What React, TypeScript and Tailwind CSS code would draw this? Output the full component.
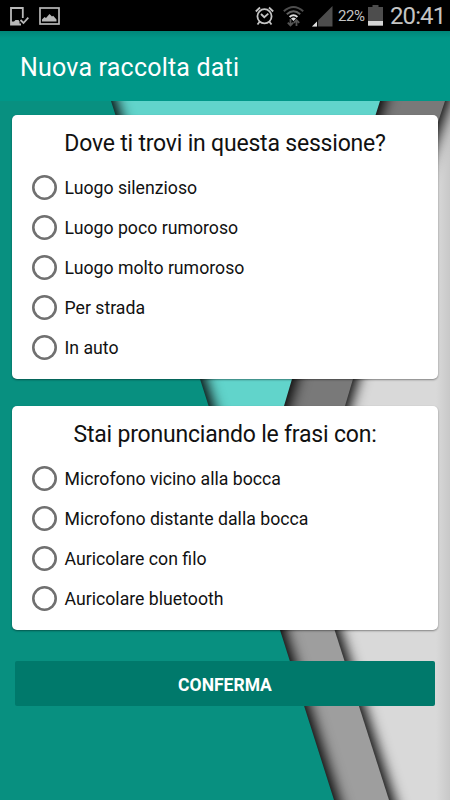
import React from 'react';

const places = [
  'Luogo silenzioso',
  'Luogo poco rumoroso',
  'Luogo molto rumoroso',
  'Per strada',
  'In auto',
];

const devices = [
  'Microfono vicino alla bocca',
  'Microfono distante dalla bocca',
  'Auricolare con filo',
  'Auricolare bluetooth',
];

function StatusBar() {
  return (
    <div className="flex h-[31px] items-center bg-black text-[#c4c4c4]">
      {/* Notifications */}
      <svg className="ml-[10px] h-[20px] w-[19px]" viewBox="0 0 19 20" fill="none" stroke="#b8b8b8">
        <path d="M12.8 12V2H1v16.500h10" strokeWidth="1.8" />
        <path d="M1 15.5h3l1.500-1.400h3l1 1.400v3H1z" fill="#b8b8b8" stroke="none" />
        <path d="M10.5 14l3 3 4.800-5.300" strokeWidth="1.8" />
      </svg>
      <svg className="ml-[10px] h-[20px] w-[21px]" viewBox="0 0 21 20">
        <rect x="1" y="2" width="19" height="16" fill="none" stroke="#b8b8b8" strokeWidth="1.7" />
        <path d="M3 15.500v-2l2.500-2.500 1.500 1 3.500-4 2.500 2.500 1.200-.8 3.300 3.800v2z" fill="#b8b8b8" />
      </svg>

      {/* System icons */}
      <svg className="ml-auto h-[20px] w-[19px]" viewBox="0 0 19 20" fill="none" stroke="#c4c4c4" strokeWidth="1.8">
        <circle cx="9.5" cy="10.3" r="7.1" />
        <path d="M6 8l3.300 3.200 4-3.600M.8 5.500l4.200-4M18.200 5.500l-4.200-4M4.800 15.500l-2.300 3M14.200 15.500l2.300 3" />
      </svg>
      <svg className="ml-[9px] h-[22px] w-[21px]" viewBox="0 0 21 22" fill="none" strokeWidth="2">
        <path d="M.8 6.3q9.7-8.6 19.4 0" stroke="#4d4d4d" />
        <path d="M3.8 9.2q6.7-6 13.4 0" stroke="#626262" />
        <path d="M6.6 12q3.9-3.5 7.8 0" stroke="#dedede" />
        <path d="M8 13.5q2.5-2 5 0L10.5 16z" fill="#dedede" />
        <path d="M7.5 14v6M4.8 17.7l2.7 2.8 2.7-2.8M13.5 21v-6M10.8 17.8l2.7-2.8 2.7 2.8" stroke="#555" strokeWidth="1.8" />
      </svg>
      <svg className="ml-[8px] h-[22px] w-[21px]" viewBox="0 0 21 22">
        <path d="M20.5 1v20.5H0z" fill="#4d4d4d" />
        <path d="M5 16.5v5H0z" fill="#e0e0e0" />
        <path d="M5.6 15v7" stroke="#000" strokeWidth="1" />
      </svg>
      <span className="ml-[5px] w-[28px] pt-[2px] text-[15px] tracking-[-0.4px] whitespace-nowrap">22%</span>
      <svg className="ml-[2px] h-[21px] w-[15px]" viewBox="0 0 15 21">
        <path d="M0 2h4.500V0h6v2H15v19H0z" fill="#4d4d4d" />
        <path d="M0 16h15v4.500H0z" fill="#d5d5d5" />
      </svg>
      <span className="mr-[6px] ml-[7px] w-[54px] text-[24px] tracking-[-0.9px] whitespace-nowrap">20:41</span>
    </div>
  );
}

// Overlapping sheets of paper, each one casting a shadow to its right
function Wallpaper() {
  return (
    <svg className="absolute inset-0 h-full w-full" viewBox="0 101 450 699" preserveAspectRatio="none">
      <defs>
        <filter
          id="shade"
          filterUnits="userSpaceOnUse"
          x="-50"
          y="50"
          width="560"
          height="800"
          colorInterpolationFilters="sRGB"
        >
          <feDropShadow dx="5.5" dy="0" stdDeviation="6.5" floodColor="#000" floodOpacity="0.95" />
        </filter>
        <linearGradient id="edge">
          <stop offset="0" stopColor="#000" stopOpacity="0" />
          <stop offset="1" stopColor="#000" stopOpacity="0.08" />
        </linearGradient>
      </defs>
      <rect y="101" width="450" height="699" fill="#d9d9d9" />
      <rect x="436" y="101" width="14" height="699" fill="url(#edge)" />
      <polygon points="100,-100 100,900 421,900 229,300" fill="#9e9e9e" filter="url(#shade)" />
      <polygon points="-50,40 464,40 445,101 353,379 345,406 273,630 -50,630" fill="#797979" filter="url(#shade)" />
      <polygon points="-50,40 399,40 380,101 292,379 284,406 242,536 -50,536" fill="#61d4cb" filter="url(#shade)" />
      <polygon points="-50,40 91.5,40 111,101 200,379 280,630 334,800 366,900 -50,900" fill="#089080" filter="url(#shade)" />
    </svg>
  );
}

function Question({ title, name, options }: { title: string; name: string; options: string[] }) {
  return (
    <section className="rounded-[5px] bg-white pt-[10px] pb-[12px] shadow-[0_1px_2px_rgba(0,0,0,0.4)]">
      <h2 className="h-[42px] text-center text-[23px] leading-[38px] tracking-[-0.2px] whitespace-nowrap text-[#111]">
        {title}
      </h2>
      {options.map((option) => (
        <label key={option} className="flex h-[40px] items-center">
          <input
            type="radio"
            name={name}
            className="ml-5 size-[25px] appearance-none rounded-full shadow-[inset_0_0_0_2.6px_#707070] checked:shadow-[inset_0_0_0_7px_#707070]"
          />
          <span className="ml-[7.5px] pt-[2px] text-[17.7px] whitespace-nowrap text-[#111]">{option}</span>
        </label>
      ))}
    </section>
  );
}

export default function App() {
  return (
    <div className="flex h-[800px] w-[450px] flex-col overflow-hidden font-[Roboto,sans-serif]">
      <StatusBar />
      <header className="flex h-[70px] items-center bg-gradient-to-b from-[#008779] via-[#009788] via-10% to-[#009788] pt-[3px] pl-5 text-white">
        <h1 className="text-[25px] tracking-[0.2px] whitespace-nowrap">Nuova raccolta dati</h1>
      </header>
      <main className="relative flex-1">
        <Wallpaper />
        <div className="relative flex flex-col gap-[27px] px-3 pt-[14px]">
          <Question title="Dove ti trovi in questa sessione?" name="place" options={places} />
          <Question title="Stai pronunciando le frasi con:" name="device" options={devices} />
          <button className="mx-[3px] mt-1 h-[45px] rounded-[2px] bg-[#00796b] pt-[3px] text-[17.5px] font-bold text-white">
            CONFERMA
          </button>
        </div>
      </main>
    </div>
  );
}
